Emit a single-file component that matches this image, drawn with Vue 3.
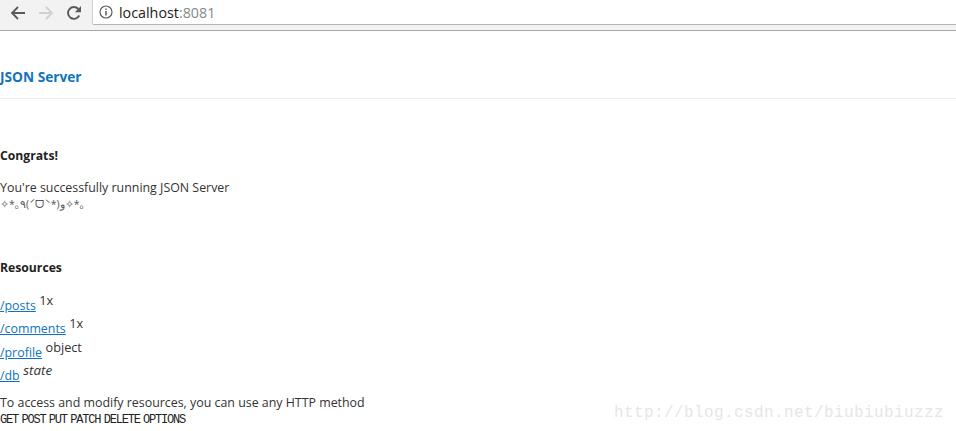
<script setup>
const resources = [
  { path: '/posts', note: '1x' },
  { path: '/comments', note: '1x' },
  { path: '/profile', note: 'object' },
  { path: '/db', note: 'state', italic: true },
]
const methods = ['GET', 'POST', 'PUT', 'PATCH', 'DELETE', 'OPTIONS']
</script>

<template>
  <div class="page">
    <div class="toolbar">
      <div class="nav">
        <svg class="icon" viewBox="0 0 16 16" width="16" height="16">
          <path d="M15 8H2.5M8 2L2 8l6 6" fill="none" stroke="#5a5a5a" stroke-width="1.8" />
        </svg>
        <svg class="icon" viewBox="0 0 16 16" width="16" height="16">
          <path d="M1 8h12.5M8 2l6 6-6 6" fill="none" stroke="#d0d0d0" stroke-width="1.8" />
        </svg>
        <svg class="icon" viewBox="0 0 16 16" width="16" height="16">
          <path d="M13.2 10.5A5.9 5.9 0 1 1 12.3 4" fill="none" stroke="#5a5a5a" stroke-width="1.9" />
          <path d="M15 1v6.2H8.8z" fill="#5a5a5a" />
        </svg>
      </div>
      <div class="omnibox">
        <svg viewBox="0 0 14 14" width="14" height="14">
          <circle cx="7" cy="7" r="6" fill="none" stroke="#5a5a5a" stroke-width="1.2" />
          <path d="M7 6v4.4M7 3.4v1.5" stroke="#5a5a5a" stroke-width="1.5" />
        </svg>
        <span class="url">localhost<span class="port">:8081</span></span>
      </div>
    </div>

    <header class="brand">JSON Server</header>

    <main>
      <h4 class="congrats">Congrats!</h4>
      <p class="lead">
        You're successfully running JSON Server<br />
        <span class="kaomoji">✧*｡٩(ˊᗜˋ*)و✧*｡</span>
      </p>

      <h4 class="resources">Resources</h4>
      <ul>
        <li v-for="item in resources" :key="item.path">
          <a href="#">{{ item.path }}</a>
          <sup :class="{ italic: item.italic }">{{ item.note }}</sup>
        </li>
      </ul>

      <p class="access">To access and modify resources, you can use any HTTP method</p>
      <div class="methods">
        <code v-for="m in methods" :key="m">{{ m }}</code>
      </div>
    </main>

    <div class="watermark">http://blog.csdn.net/biubiubiuzzz</div>
  </div>
</template>

<style scoped>
.page {
  position: relative;
  height: 431px;
  overflow: hidden;
  background: #fff;
  color: #333;
  font-family: "Open Sans", "Noto Sans CJK SC", sans-serif;
  font-size: 12.4px;
}

.toolbar {
  display: flex;
  height: 31px;
  background: #f2f2f2;
  border-bottom: 1px solid #a9a9a9;
  box-sizing: border-box;
}

.nav {
  display: flex;
  align-items: center;
  gap: 12px;
  width: 92px;
  padding: 0 0 4px 10px;
  box-sizing: border-box;
}

.omnibox {
  display: flex;
  flex: 1;
  align-items: center;
  gap: 6px;
  height: 25px;
  padding-left: 6px;
  background: #fff;
  border-left: 1px solid #cfcfcf;
  border-bottom: 1px solid #b5b5b5;
  border-radius: 0 0 0 2px;
  box-sizing: border-box;
}

.url {
  font-family: "Open Sans", sans-serif;
  font-size: 14.3px;
  color: #222;
}

.port {
  color: #888;
}

.brand {
  height: 68px;
  line-height: 92px;
  box-sizing: border-box;
  border-bottom: 1px solid #eee;
  color: #0f73c0;
  font-size: 13.7px;
  font-weight: 700;
}

.congrats,
.resources {
  margin: 0;
  font-size: 12.2px;
  font-weight: 700;
  color: #222;
  line-height: 16px;
}

.congrats {
  padding-top: 49px;
}

.lead {
  margin: 16px 0 0;
  line-height: 16px;
}

.kaomoji {
  display: block;
  font-size: 10.5px;
  line-height: 16px;
  color: #555;
}

.resources {
  margin-top: 48px;
}

ul {
  list-style: none;
  margin: 18px 0 0;
  padding: 0;
}

li {
  height: 23.4px;
  line-height: 23.4px;
}

a {
  color: #0f73c0;
  text-decoration: underline;
}

sup {
  font-size: 12.7px;
  line-height: 0;
  margin-left: 3.5px;
  vertical-align: 5px;
}

.italic {
  font-style: italic;
  font-size: 13.4px;
}

.access {
  margin: 7px 0 0;
  line-height: 16px;
}

.methods {
  display: flex;
  gap: 3.4px;
  line-height: 18px;
}

code {
  font-family: "Liberation Mono", monospace;
  font-size: 12px;
  letter-spacing: -1.2px;
  color: #222;
}

.watermark {
  position: absolute;
  right: 12px;
  bottom: 9px;
  font-family: "Liberation Mono", monospace;
  font-size: 16px;
  color: #e6e6e6;
  letter-spacing: 0.4px;
}
</style>
